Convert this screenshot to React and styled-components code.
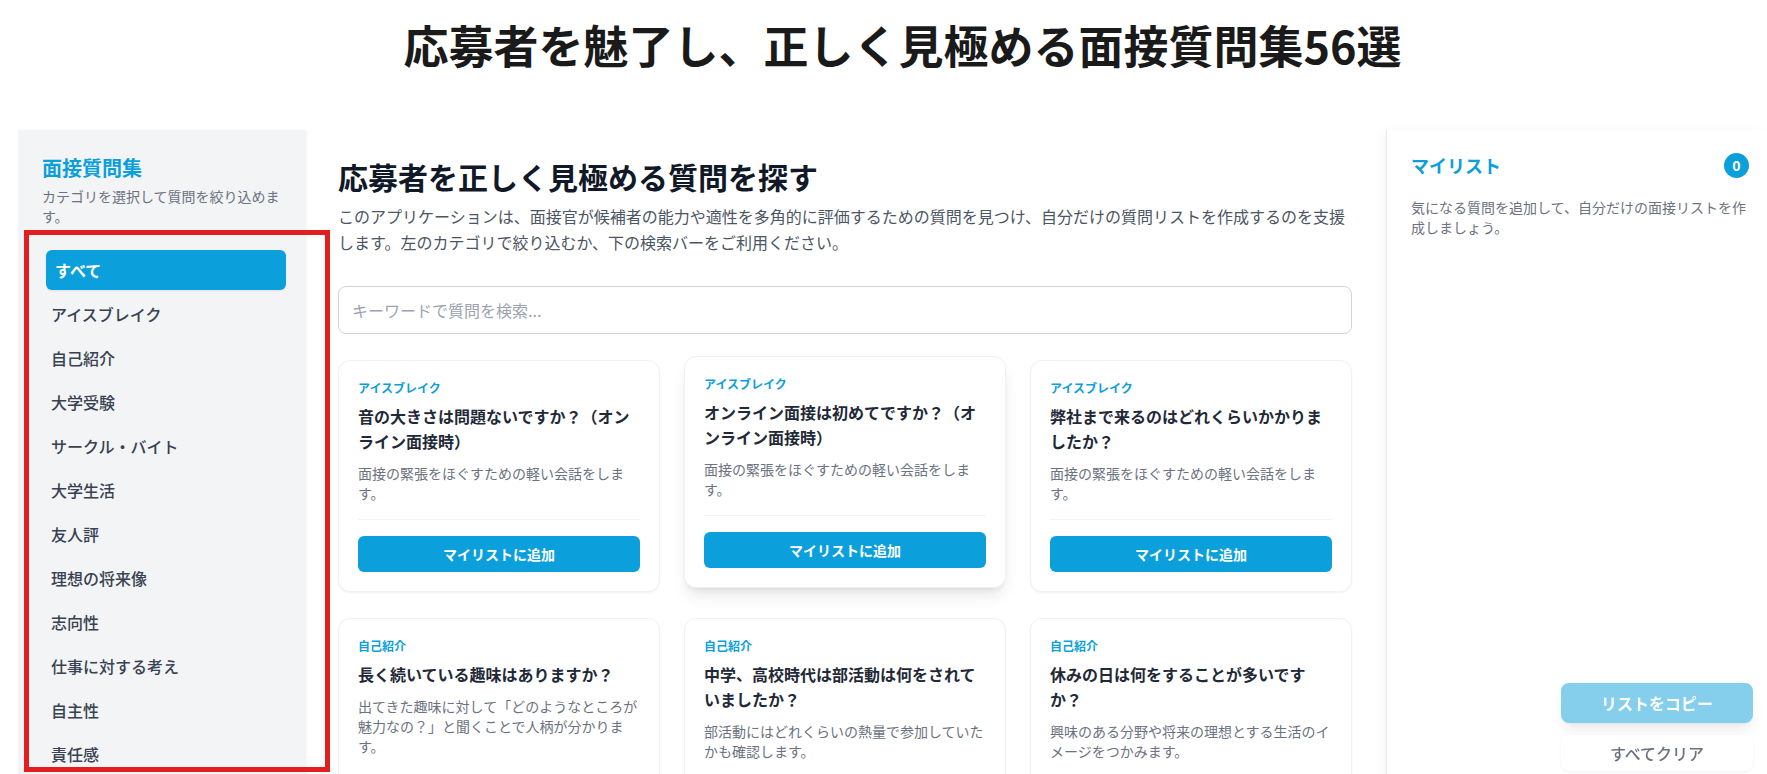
import styled, { createGlobalStyle } from "styled-components";

const GlobalStyle = createGlobalStyle`
  body {
    margin: 0;
    background: #ffffff;
    font-family: "Noto Sans CJK JP", "Noto Sans", sans-serif;
    color: #1f2937;
  }
  * { box-sizing: border-box; }
`;

const BLUE = "#0b9fdc";

const Page = styled.div`
  position: relative;
`;

const Header = styled.header`
  height: 130px;
  padding: 18px 0 0 38px;
  text-align: center;
`;

const Title = styled.h1`
  margin: 0;
  font-size: 45px;
  line-height: 54px;
  font-weight: 700;
  color: #1a1a1a;
`;

const Body = styled.div`
  display: flex;
  padding-left: 18px;
  align-items: stretch;
`;

const Sidebar = styled.aside`
  width: 288px;
  flex-shrink: 0;
  background: #f3f4f6;
  padding: 24px;
  box-shadow: 1px 0 3px rgba(0, 0, 0, 0.04);
`;

const SideTitle = styled.h2`
  margin: 0;
  font-size: 20px;
  line-height: 28px;
  font-weight: 700;
  color: ${BLUE};
`;

const SideNote = styled.p`
  margin: 4px 0 0;
  font-size: 14px;
  line-height: 20px;
  color: #6b7280;
`;

const CategoryList = styled.nav`
  margin-top: 24px;
  display: flex;
  flex-direction: column;
  gap: 4px;
`;

const Category = styled.button`
  height: 40px;
  border: none;
  border-radius: 6px;
  padding: 0 9px;
  text-align: left;
  font-family: inherit;
  font-size: 16px;
  font-weight: ${(p) => (p.$active ? 700 : 500)};
  color: ${(p) => (p.$active ? "#ffffff" : "#374151")};
  background: ${(p) => (p.$active ? BLUE : "transparent")};
  transform: ${(p) => (p.$active ? "translateX(4px)" : "none")};
  box-shadow: ${(p) => (p.$active ? "0 1px 2px rgba(0,0,0,0.08)" : "none")};
  cursor: pointer;
`;

const Main = styled.main`
  flex: 1;
  min-width: 0;
  padding: 28px 34px 40px 32px;
`;

const MainTitle = styled.h2`
  margin: 0 0 9px;
  font-size: 30px;
  line-height: 36px;
  font-weight: 700;
  color: #111827;
`;

const Lead = styled.p`
  margin: 0;
  font-size: 16px;
  line-height: 26px;
  color: #4b5563;
`;

const Search = styled.input`
  display: block;
  width: 100%;
  height: 48px;
  margin: 31px 0 26px;
  padding: 0 13px;
  border: 1px solid #d1d5db;
  border-radius: 8px;
  font-family: inherit;
  font-size: 16px;
  color: #111827;
  outline: none;
  &::placeholder {
    color: #9ca3af;
  }
`;

const CardGrid = styled.div`
  display: grid;
  grid-template-columns: repeat(3, 1fr);
  gap: 26px 24px;
`;

const Card = styled.article`
  display: flex;
  flex-direction: column;
  padding: 19px;
  background: #ffffff;
  border: 1px solid #eff1f3;
  border-radius: 12px;
  transform: ${(p) => (p.$raised ? "translateY(-4px)" : "none")};
  box-shadow: ${(p) =>
    p.$raised
      ? "0 10px 15px -3px rgba(0,0,0,0.1), 0 4px 6px -4px rgba(0,0,0,0.1)"
      : "0 1px 2px rgba(0,0,0,0.05)"};
`;

const CardTag = styled.span`
  font-size: 12px;
  line-height: 16px;
  font-weight: 700;
  color: ${BLUE};
`;

const CardTitle = styled.h3`
  margin: 8px 0 9px;
  font-size: 16px;
  line-height: 25px;
  font-weight: 700;
  color: #1f2937;
`;

const CardText = styled.p`
  flex: 1;
  margin: 0;
  font-size: 14px;
  line-height: 20px;
  color: #6b7280;
`;

const CardFoot = styled.div`
  margin-top: 16px;
  padding-top: 16px;
  border-top: 1px solid #f3f4f6;
`;

const AddButton = styled.button`
  width: 100%;
  height: 36px;
  border: none;
  border-radius: 6px;
  background: ${BLUE};
  color: #ffffff;
  font-family: inherit;
  font-size: 14px;
  font-weight: 700;
  cursor: pointer;
`;

const MyList = styled.aside`
  width: 381px;
  flex-shrink: 0;
  padding: 21px 20px 24px 24px;
  border-left: 1px solid #e7e9ec;
  box-shadow: -4px 0 10px rgba(0, 0, 0, 0.03);
  min-height: 644px;
`;

const ListHead = styled.div`
  display: flex;
  align-items: center;
  justify-content: space-between;
  margin-bottom: 18px;
`;

const ListTitle = styled.h2`
  margin: 0;
  font-size: 18px;
  line-height: 28px;
  font-weight: 700;
  color: ${BLUE};
`;

const Badge = styled.span`
  width: 25px;
  height: 25px;
  margin-right: -2px;
  border-radius: 50%;
  background: ${BLUE};
  color: #ffffff;
  font-size: 14px;
  font-weight: 700;
  display: flex;
  align-items: center;
  justify-content: center;
`;

const ListNote = styled.p`
  margin: 0;
  font-size: 14px;
  line-height: 20px;
  color: #6b7280;
`;

const FloatActions = styled.div`
  position: fixed;
  right: 14px;
  bottom: 3px;
  width: 192px;
  display: flex;
  flex-direction: column;
  gap: 12px;
`;

const ActionButton = styled.button`
  height: ${(p) => (p.$primary ? "40px" : "36px")};
  border: none;
  border-radius: 8px;
  font-family: inherit;
  font-size: 16px;
  font-weight: ${(p) => (p.$primary ? 700 : 500)};
  color: ${(p) => (p.$primary ? "#ffffff" : "#6b7280")};
  background: ${(p) => (p.$primary ? "rgba(11, 159, 220, 0.5)" : "#ffffff")};
  box-shadow: ${(p) =>
    p.$primary
      ? "0 10px 15px -3px rgba(0,0,0,0.08), 0 4px 6px -4px rgba(0,0,0,0.08)"
      : "0 1px 3px rgba(0,0,0,0.06)"};
`;

const Highlight = styled.div`
  position: absolute;
  left: 24px;
  top: 230px;
  width: 306px;
  height: 542px;
  border: 5px solid #e31e1e;
  pointer-events: none;
`;

const categories = [
  "すべて",
  "アイスブレイク",
  "自己紹介",
  "大学受験",
  "サークル・バイト",
  "大学生活",
  "友人評",
  "理想の将来像",
  "志向性",
  "仕事に対する考え",
  "自主性",
  "責任感",
];

const questions = [
  {
    tag: "アイスブレイク",
    title: "音の大きさは問題ないですか？（オンライン面接時）",
    text: "面接の緊張をほぐすための軽い会話をします。",
  },
  {
    tag: "アイスブレイク",
    title: "オンライン面接は初めてですか？（オンライン面接時）",
    text: "面接の緊張をほぐすための軽い会話をします。",
    raised: true,
  },
  {
    tag: "アイスブレイク",
    title: "弊社まで来るのはどれくらいかかりましたか？",
    text: "面接の緊張をほぐすための軽い会話をします。",
  },
  {
    tag: "自己紹介",
    title: "長く続いている趣味はありますか？",
    text: "出てきた趣味に対して「どのようなところが魅力なの？」と聞くことで人柄が分かります。",
  },
  {
    tag: "自己紹介",
    title: "中学、高校時代は部活動は何をされていましたか？",
    text: "部活動にはどれくらいの熱量で参加していたかも確認します。",
  },
  {
    tag: "自己紹介",
    title: "休みの日は何をすることが多いですか？",
    text: "興味のある分野や将来の理想とする生活のイメージをつかみます。",
  },
];

function App() {
  return (
    <Page>
      <GlobalStyle />
      <Header>
        <Title>応募者を魅了し、正しく見極める面接質問集56選</Title>
      </Header>
      <Body>
        <Sidebar>
          <SideTitle>面接質問集</SideTitle>
          <SideNote>カテゴリを選択して質問を絞り込めます。</SideNote>
          <CategoryList>
            {categories.map((c, i) => (
              <Category key={c} $active={i === 0}>
                {c}
              </Category>
            ))}
          </CategoryList>
        </Sidebar>
        <Main>
          <MainTitle>応募者を正しく見極める質問を探す</MainTitle>
          <Lead>
            このアプリケーションは、面接官が候補者の能力や適性を多角的に評価するための質問を見つけ、自分だけの質問リストを作成するのを支援します。左のカテゴリで絞り込むか、下の検索バーをご利用ください。
          </Lead>
          <Search placeholder="キーワードで質問を検索..." />
          <CardGrid>
            {questions.map((q) => (
              <Card key={q.title} $raised={q.raised}>
                <CardTag>{q.tag}</CardTag>
                <CardTitle>{q.title}</CardTitle>
                <CardText>{q.text}</CardText>
                <CardFoot>
                  <AddButton>マイリストに追加</AddButton>
                </CardFoot>
              </Card>
            ))}
          </CardGrid>
        </Main>
        <MyList>
          <ListHead>
            <ListTitle>マイリスト</ListTitle>
            <Badge>0</Badge>
          </ListHead>
          <ListNote>
            気になる質問を追加して、自分だけの面接リストを作成しましょう。
          </ListNote>
        </MyList>
      </Body>
      <FloatActions>
        <ActionButton $primary>リストをコピー</ActionButton>
        <ActionButton>すべてクリア</ActionButton>
      </FloatActions>
      <Highlight />
    </Page>
  );
}

export default App;
